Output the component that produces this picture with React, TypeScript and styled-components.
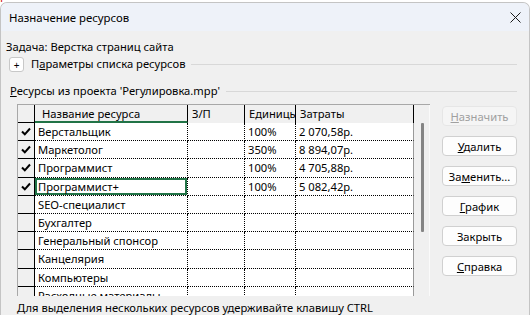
import styled, { createGlobalStyle } from "styled-components";

const GlobalStyle = createGlobalStyle`
  html, body {
    margin: 0;
    padding: 0;
    background: #ffffff;
    font-family: "Segoe UI", "Noto Sans", "Liberation Sans", sans-serif;
    font-size: 11.2px;
    color: #000;
  }
  * { box-sizing: border-box; }
`;

const Backdrop = styled.div`
  height: 2px;
  overflow: hidden;
  display: flex;
  background: #fff;
`;

const BackdropText = styled.span<{ $w: number }>`
  width: ${(p) => p.$w}px;
  flex: none;
  color: #d62020;
  font-size: 12px;
  line-height: 12px;
  margin-top: -10px;
  white-space: nowrap;
  overflow: hidden;
`;

const Dialog = styled.div`
  width: 530px;
  background: #f0f0f0;
  border: 1px solid #c4c4c4;
  border-bottom: none;
  border-radius: 7px 7px 0 0;
  overflow: hidden;
`;

const TitleBar = styled.div`
  height: 28px;
  background: #eef2f9;
  display: flex;
  align-items: center;
  justify-content: space-between;
  padding: 0 8px 0 8px;
`;

const Title = styled.span`
  font-size: 11.4px;
`;

const Body = styled.div`
  padding: 8px 12px 0 5px;
`;

const TaskLine = styled.div`
  height: 15px;
  line-height: 15px;
`;

const SectionRow = styled.div<{ $top: number; $indent: number }>`
  display: flex;
  align-items: center;
  height: 15px;
  margin-top: ${(p) => p.$top}px;
  margin-left: ${(p) => p.$indent}px;
`;

const PlusBox = styled.div`
  width: 15px;
  height: 15px;
  border: 1px solid #c8c8c8;
  border-radius: 3px;
  background: #fff;
  display: flex;
  align-items: flex-end;
  justify-content: center;
  font-size: 10px;
  line-height: 11px;
  margin-right: 7px;
`;

const SectionLabel = styled.span`
  white-space: nowrap;
  margin-top: -3px;
`;

const Rule = styled.div`
  flex: 1;
  height: 1px;
  background: #d8d8d8;
  margin-left: 6px;
`;

const Main = styled.div`
  display: flex;
  gap: 12px;
  margin-top: 5px;
  margin-left: 11px;
`;

const TableBox = styled.div`
  width: 413px;
  height: 192px;
  border-top: 1px solid #a8a8a8;
  border-left: 1px solid #a8a8a8;
  display: flex;
  overflow: hidden;
`;

const Grid = styled.div`
  width: 396px;
  display: flex;
  flex-direction: column;
`;

const cols = "17px 153px 57px 51px 118px";

const HeaderRow = styled.div`
  display: grid;
  grid-template-columns: ${cols};
  height: 18px;
  flex: none;
  background: #f0f0f0;
`;

const HeadCell = styled.div<{ $active?: boolean; $corner?: boolean }>`
  border-right: 1px solid #000;
  border-bottom: ${(p) => (p.$active ? "2px solid #217346" : p.$corner ? "1px solid #000" : "none")};
  padding-left: ${(p) => (p.$active ? 7 : 4)}px;
  line-height: 17px;
  white-space: nowrap;
  overflow: hidden;
`;

const Row = styled.div`
  display: grid;
  grid-template-columns: ${cols};
  height: 18.2px;
  flex: none;
`;

const CheckCell = styled.div`
  background: #f0f0f0;
  border-right: 1px solid #000;
  border-bottom: 1px solid #000;
  display: flex;
  align-items: center;
  justify-content: center;
`;

const Cell = styled.div<{ $selected?: boolean; $last?: boolean }>`
  background: #fff;
  border-right: ${(p) => (p.$last ? "1px solid #9a9a9a" : "1px dotted #000")};
  border-bottom: 1px dotted #000;
  padding-left: 3px;
  line-height: 17px;
  white-space: nowrap;
  overflow: hidden;
  box-shadow: ${(p) => (p.$selected ? "inset 0 0 0 2px #217346" : "none")};
`;

const ScrollTrack = styled.div`
  width: 16px;
  background: #f0f0f0;
  padding: 18px 0 0 7px;
  border-right: 1px solid #fafafa;
`;

const Thumb = styled.div`
  width: 3px;
  height: 109px;
  background: #858585;
  border-radius: 1px;
`;

const ButtonColumn = styled.div`
  display: flex;
  flex-direction: column;
  gap: 10px;
  padding-top: 2px;
`;

const Button = styled.button<{ $disabled?: boolean }>`
  width: 75px;
  height: 20px;
  padding: 0;
  font: inherit;
  line-height: 17px;
  color: ${(p) => (p.$disabled ? "#a0a0a0" : "#000")};
  background: ${(p) => (p.$disabled ? "#f5f5f5" : "#fdfdfd")};
  border: 1px solid ${(p) => (p.$disabled ? "#e6e6e6" : "#d0d0d0")};
  border-radius: 4px;
`;

const Footnote = styled.div`
  margin: 4px 0 0 11px;
  height: 15px;
  line-height: 15px;
  white-space: nowrap;
`;

function Check() {
  return (
    <svg width="10" height="9" viewBox="0 0 10 9">
      <path d="M1 4.5 L3.8 7.3 L9 1.5" fill="none" stroke="#000" strokeWidth="2" />
    </svg>
  );
}

function CloseIcon() {
  return (
    <svg width="11" height="11" viewBox="0 0 11 11">
      <path d="M0.5 0.5 L10.5 10.5 M10.5 0.5 L0.5 10.5" stroke="#1a1a1a" strokeWidth="1" />
    </svg>
  );
}

type Resource = { name: string; checked?: boolean; units?: string; cost?: string; selected?: boolean };

const resources: Resource[] = [
  { name: "Верстальщик", checked: true, units: "100%", cost: "2 070,58р." },
  { name: "Маркетолог", checked: true, units: "350%", cost: "8 894,07р." },
  { name: "Программист", checked: true, units: "100%", cost: "4 705,88р." },
  { name: "Программист+", checked: true, units: "100%", cost: "5 082,42р.", selected: true },
  { name: "SEO-специалист" },
  { name: "Бухгалтер" },
  { name: "Генеральный спонсор" },
  { name: "Канцелярия" },
  { name: "Компьютеры" },
  { name: "Расходные материалы" },
];

export default function App() {
  return (
    <>
      <GlobalStyle />
      <Backdrop>
        <BackdropText $w={140}>рб</BackdropText>
        <BackdropText $w={70}>2 000</BackdropText>
        <BackdropText $w={183}>000 000 00</BackdropText>
        <BackdropText $w={60}>0 000</BackdropText>
      </Backdrop>
      <Dialog>
        <TitleBar>
          <Title>Назначение ресурсов</Title>
          <CloseIcon />
        </TitleBar>
        <Body>
          <TaskLine>Задача: Верстка страниц сайта</TaskLine>
          <SectionRow $top={3} $indent={3}>
            <PlusBox>+</PlusBox>
            <SectionLabel>
              П<u>а</u>раметры списка ресурсов
            </SectionLabel>
            <Rule />
          </SectionRow>
          <SectionRow $top={12} $indent={4}>
            <SectionLabel>
              <u>Р</u>есурсы из проекта 'Регулировка.mpp'
            </SectionLabel>
            <Rule />
          </SectionRow>
          <Main>
            <TableBox>
              <Grid>
                <HeaderRow>
                  <HeadCell $corner />
                  <HeadCell $active>Название ресурса</HeadCell>
                  <HeadCell>З/П</HeadCell>
                  <HeadCell>Единицы</HeadCell>
                  <HeadCell>Затраты</HeadCell>
                </HeaderRow>
                {resources.map((r) => (
                  <Row key={r.name}>
                    <CheckCell>{r.checked && <Check />}</CheckCell>
                    <Cell $selected={r.selected}>{r.name}</Cell>
                    <Cell />
                    <Cell>{r.units}</Cell>
                    <Cell $last>{r.cost}</Cell>
                  </Row>
                ))}
              </Grid>
              <ScrollTrack>
                <Thumb />
              </ScrollTrack>
            </TableBox>
            <ButtonColumn>
              <Button $disabled>
                <u>Н</u>азначить
              </Button>
              <Button>
                <u>У</u>далить
              </Button>
              <Button>
                За<u>м</u>енить...
              </Button>
              <Button>
                <u>Г</u>рафик
              </Button>
              <Button>Закрыть</Button>
              <Button>
                <u>С</u>правка
              </Button>
            </ButtonColumn>
          </Main>
          <Footnote>Для выделения нескольких ресурсов удерживайте клавишу CTRL</Footnote>
        </Body>
      </Dialog>
    </>
  );
}
